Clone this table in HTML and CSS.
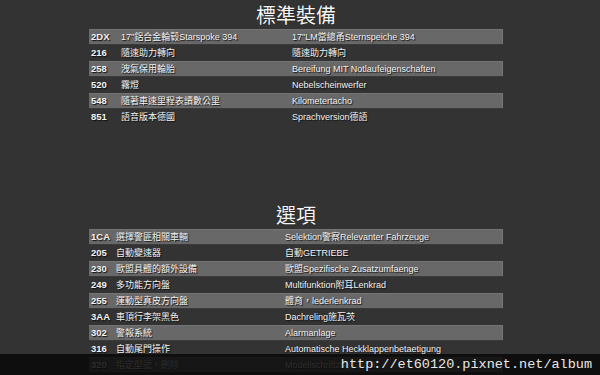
FILE: index.html
```html
<!DOCTYPE html>
<html lang="zh-Hant">
<head>
<meta charset="utf-8">
<link rel="stylesheet" href="styles.css">
</head>
<body>
<div class="page">
  <section class="sec sec-std">
    <h2 class="title">標準裝備</h2>
    <div class="tbl">
      <div class="row alt"><span class="code">2DX</span><span>17"鋁合金輪毂Starspoke 394</span><span>17"LM當總甬Sternspeiche 394</span></div>
      <div class="row"><span class="code">216</span><span>隨速助力轉向</span><span>隨速助力轉向</span></div>
      <div class="row alt"><span class="code">258</span><span>洩氣保用輪胎</span><span>Bereifung MIT Notlaufeigenschaften</span></div>
      <div class="row"><span class="code">520</span><span>霧燈</span><span>Nebelscheinwerfer</span></div>
      <div class="row alt"><span class="code">548</span><span>隨著車速里程表讀數公里</span><span>Kilometertacho</span></div>
      <div class="row"><span class="code">851</span><span>語音版本德國</span><span>Sprachversion德語</span></div>
    </div>
  </section>
  <section class="sec sec-opt">
    <h2 class="title">選項</h2>
    <div class="tbl">
      <div class="row alt"><span class="code">1CA</span><span>選擇警匪相關車輛</span><span>Selektion警察Relevanter Fahrzeuge</span></div>
      <div class="row"><span class="code">205</span><span>自動變速器</span><span>自動GETRIEBE</span></div>
      <div class="row alt"><span class="code">230</span><span>歐盟具體的額外設備</span><span>歐盟Spezifische Zusatzumfaenge</span></div>
      <div class="row"><span class="code">249</span><span>多功能方向盤</span><span>Multifunktion附耳Lenkrad</span></div>
      <div class="row alt"><span class="code">255</span><span>運動型真皮方向盤</span><span>體育，lederlenkrad</span></div>
      <div class="row"><span class="code">3AA</span><span>車頂行李架黑色</span><span>Dachreling施瓦茨</span></div>
      <div class="row alt"><span class="code">302</span><span>警報系統</span><span>Alarmanlage</span></div>
      <div class="row"><span class="code">316</span><span>自動尾門操作</span><span>Automatische Heckklappenbetaetigung</span></div>
      <div class="row alt"><span class="code">320</span><span>指定型號，刪除</span><span>Modellschriftzug Entfall</span></div>
    </div>
  </section>
</div>
<div class="watermark">http://et60120.pixnet.net/album</div>
</body>
</html>
```
FILE: styles.css
```css
html, body {
  margin: 0;
  padding: 0;
  background: #333333;
  height: 100%;
  overflow: hidden;
}
body {
  font-family: "Liberation Sans", Arial, "Noto Sans CJK TC", sans-serif;
  color: #f2f2f2;
}
.page {
  width: 414px;
  margin-left: 89px;
  display: flex;
  flex-direction: column;
}
.sec-opt {
  margin-top: 75px;
}
.title {
  margin: 0;
  height: 29px;
  line-height: 29px;
  font-size: 20px;
  font-weight: normal;
  text-align: center;
  font-family: "Noto Sans CJK TC", sans-serif;
  color: #f6f6f6;
  text-shadow: 0 0 1px #000;
}
.tbl {
  display: flex;
  flex-direction: column;
}
.row {
  display: grid;
  height: 16px;
  line-height: 16px;
  font-size: 9px;
  white-space: nowrap;
  text-shadow: 1px 1px 1px #111;
}
.sec-std .row { grid-template-columns: 30px 171px 1fr; }
.sec-opt .row { grid-template-columns: 25px 169px 1fr; }
.row span {
  padding-left: 2px;
  overflow: hidden;
}
.row .code {
  font-weight: bold;
  font-size: 9.5px;
}
.row.alt {
  background: #686868;
  box-shadow: inset 0 -1px 0 #3a3a3a, inset -1px 0 0 #777, inset 0 1px 0 #747474;
}
.watermark {
  position: absolute;
  left: 0;
  right: 0;
  top: 354px;
  height: 21px;
  background: rgba(8, 8, 8, 0.85);
  color: #e8e8e8;
  font-family: "Liberation Mono", "DejaVu Sans Mono", monospace;
  font-size: 13.5px;
  line-height: 21px;
  text-align: right;
  padding-right: 8px;
}
```
